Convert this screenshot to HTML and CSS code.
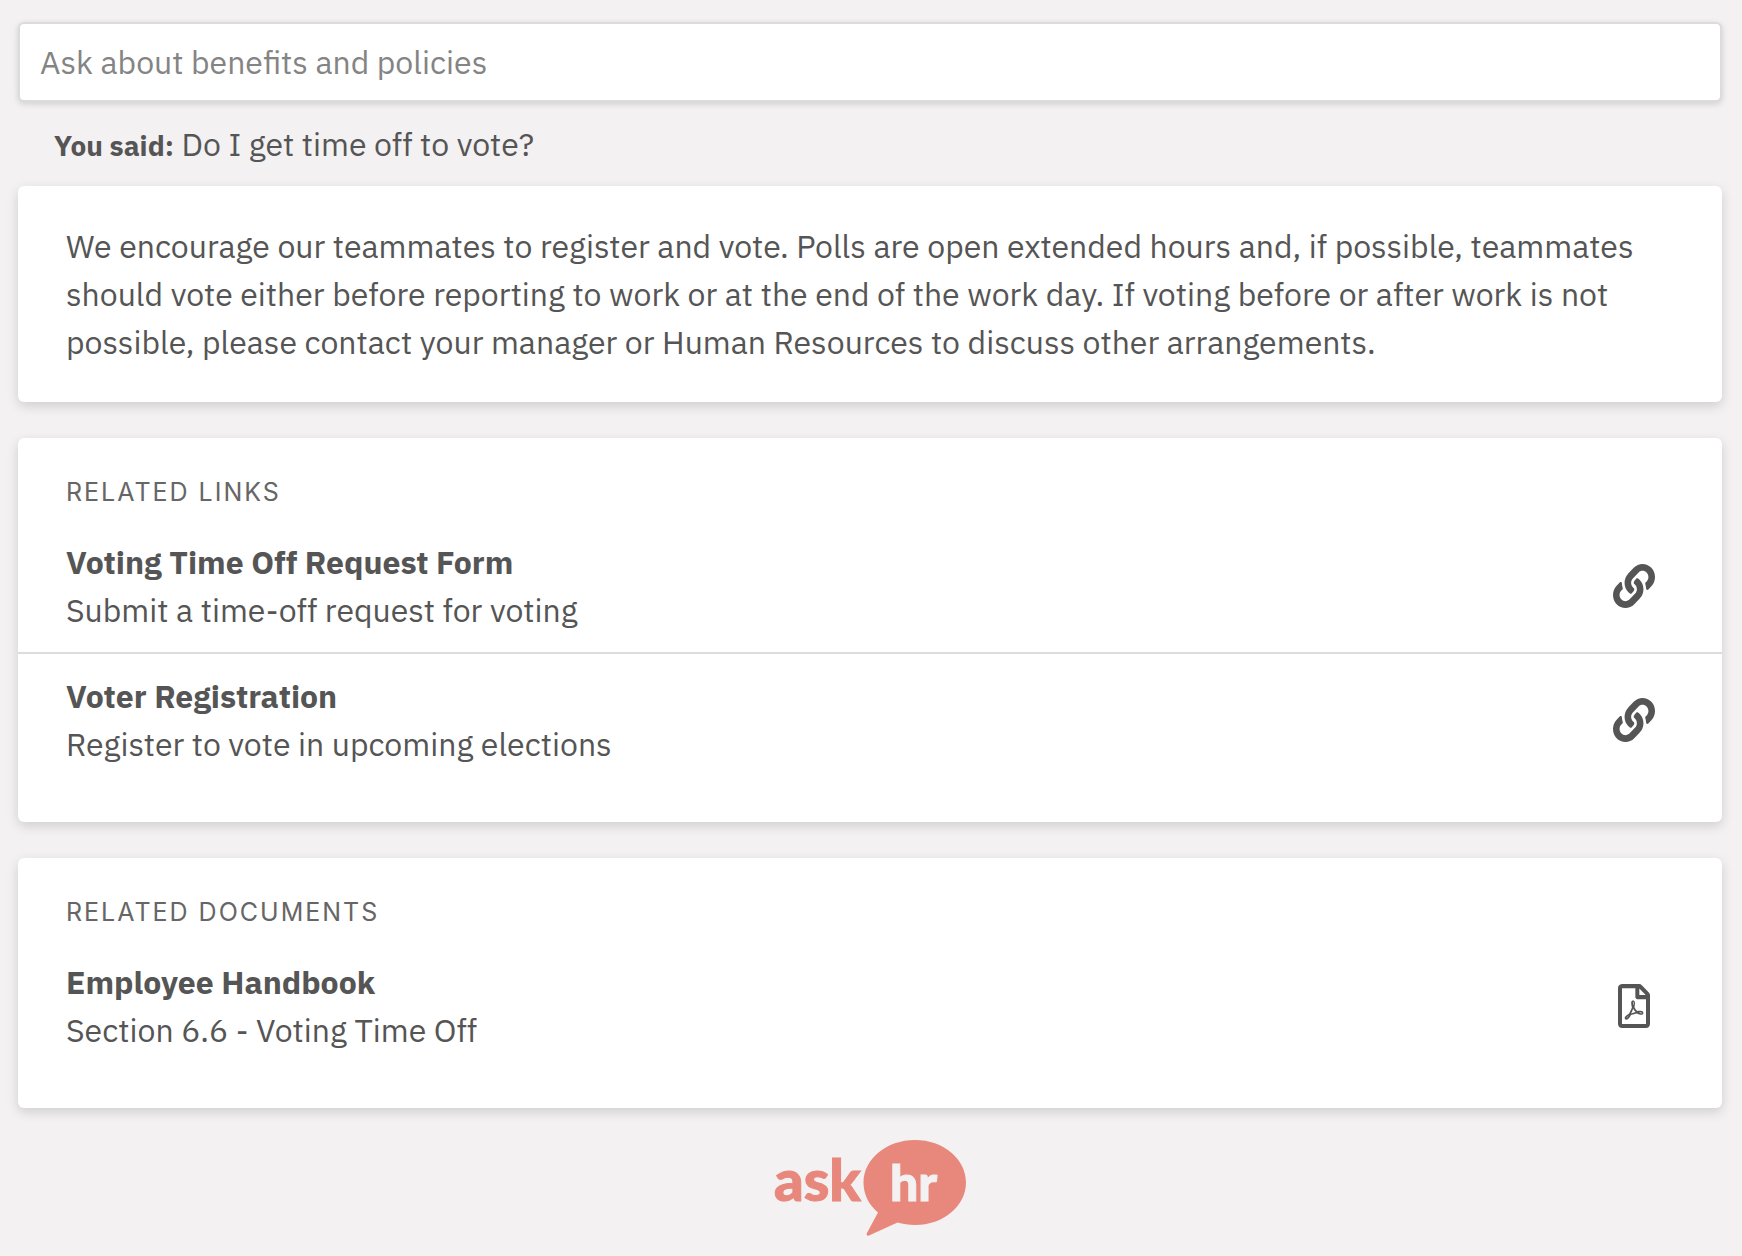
FILE: index.html
```html
<!DOCTYPE html>
<html lang="en">
<head>
    <meta charset="UTF-8">
    <meta name="viewport" content="width=device-width, initial-scale=1.0">
    <title>Ask HR</title>
    <link rel="stylesheet" href="styles.css">
</head>
<body>
    <!-- shared icon shapes -->
    <svg class="sprite" aria-hidden="true">
        <symbol id="icon-link" viewBox="0 0 512 512" preserveAspectRatio="none">
            <path d="M326.612 185.391c59.747 59.809 58.927 155.698.36 214.59-.11.12-.24.25-.36.37l-67.2 67.2c-59.27 59.27-155.699 59.262-214.96 0-59.27-59.26-59.27-155.7 0-214.96l37.106-37.106c9.84-9.84 26.786-3.3 27.294 10.606.648 17.722 3.826 35.527 9.69 52.721 1.986 5.822.567 12.262-3.783 16.612l-13.087 13.087c-28.026 28.026-28.905 73.66-1.155 101.96 28.024 28.579 74.086 28.749 102.325.51l67.2-67.19c28.191-28.191 28.073-73.757 0-101.83-3.701-3.694-7.429-6.564-10.341-8.569a16.037 16.037 0 0 1-6.947-12.606c-.396-10.567 3.348-21.456 11.698-29.806l21.054-21.055c5.521-5.521 14.182-6.199 20.584-1.731a152.482 152.482 0 0 1 20.522 17.197zM467.547 44.449c-59.261-59.262-155.69-59.27-214.96 0l-67.2 67.2c-.12.12-.25.25-.36.37-58.566 58.892-59.387 154.781.36 214.59a152.454 152.454 0 0 0 20.521 17.196c6.402 4.468 15.064 3.789 20.584-1.731l21.054-21.055c8.35-8.35 12.094-19.239 11.698-29.806a16.037 16.037 0 0 0-6.947-12.606c-2.912-2.005-6.64-4.875-10.341-8.569-28.073-28.073-28.191-73.639 0-101.83l67.2-67.19c28.239-28.239 74.3-28.069 102.325.51 27.75 28.3 26.872 73.934-1.155 101.96l-13.087 13.087c-4.35 4.35-5.769 10.79-3.783 16.612 5.864 17.194 9.042 34.999 9.69 52.721.509 13.906 17.454 20.446 27.294 10.606l37.106-37.106c59.271-59.259 59.271-155.699.001-214.959z"/>
        </symbol>
        <symbol id="icon-pdf" viewBox="0 0 384 512" preserveAspectRatio="none">
            <path d="M369.9 97.9L286 14C277 5 264.8-.1 252.1-.1H48C21.5 0 0 21.5 0 48v416c0 26.5 21.5 48 48 48h288c26.5 0 48-21.5 48-48V131.9c0-12.7-5.1-25-14.1-34zM332.1 128H256V51.9l76.1 76.1zM48 464V48h160v104c0 13.3 10.7 24 24 24h104v288H48zm250.2-143.7c-12.2-12-47-8.7-64.4-6.5-17.2-10.5-28.7-25-36.8-46.3 3.9-16.1 10.1-40.6 5.4-56-4.2-26.2-37.8-23.6-42.6-5.9-4.4 16.1-.4 38.5 7 67.1-10 23.9-24.9 56-35.4 74.4-20 10.3-47 26.2-51 46.2-3.3 15.8 26 55.2 76.1-31.2 22.4-7.4 46.8-16.5 68.4-20.1 18.9 10.2 41 17 55.8 17 25.5 0 28-28.2 17.5-38.7zm-198.1 77.8c5.1-13.7 24.5-29.5 30.4-35-19 30.3-30.4 35.7-30.4 35zm81.6-190.6c7.4 0 6.7 32.1 1.8 40.8-4.4-13.9-4.3-40.8-1.8-40.8zm-24.4 136.6c9.7-16.9 18-37 24.7-54.7 8.3 15.1 18.9 27.2 30.1 35.5-20.8 4.3-38.9 13.1-54.8 19.2zm131.6-5s-5 6-37.3-7.8c35.1-2.6 40.9 5.4 37.3 7.8z"/>
        </symbol>
    </svg>

    <main class="page">
        <form class="search">
            <input type="text" class="search-input" placeholder="Ask about benefits and policies" aria-label="Ask about benefits and policies">
        </form>
        <p class="said"><strong>You said:</strong> Do I get time off to vote?</p>

        <section class="card">
            <p class="answer">We encourage our teammates to register and vote. Polls are open extended hours and, if possible, teammates should vote either before reporting to work or at the end of the work day. If voting before or after work is not possible, please contact your manager or Human Resources to discuss other arrangements.</p>
        </section>

        <section class="card">
            <h2 class="card-title">Related Links</h2>
            <ul class="list">
                <li>
                    <a class="item" href="#">
                        <span class="item-text"><strong>Voting Time Off Request Form</strong><span>Submit a time-off request for voting</span></span>
                        <span class="item-icon"><svg class="icon-link"><use href="#icon-link"/></svg></span>
                    </a>
                </li>
                <li>
                    <a class="item" href="#">
                        <span class="item-text"><strong>Voter Registration</strong><span>Register to vote in upcoming elections</span></span>
                        <span class="item-icon"><svg class="icon-link"><use href="#icon-link"/></svg></span>
                    </a>
                </li>
            </ul>
        </section>

        <section class="card">
            <h2 class="card-title">Related Documents</h2>
            <ul class="list">
                <li>
                    <a class="item" href="#">
                        <span class="item-text"><strong>Employee Handbook</strong><span>Section 6.6 - Voting Time Off</span></span>
                        <span class="item-icon"><svg class="icon-pdf"><use href="#icon-pdf"/></svg></span>
                    </a>
                </li>
            </ul>
        </section>
    </main>

    <footer class="footer">
        <svg class="logo" viewBox="0 0 192 96" role="img" aria-label="ask hr">
            <path class="logo-bubble" d="M141 0c28.400 0 51 19 51 42.500S169.400 85 141 85c-6.200 0-12-.9-17.500-2.500L95 95.500c-1.500.6-3-.7-2.200-2.200L104 72.500C95 65 89.500 54.500 89.500 42.500 89.500 19 112.600 0 141 0z"/>
            <text class="logo-ask" x="0" y="61">ask</text>
            <text class="logo-hr" x="116" y="61">hr</text>
        </svg>
    </footer>
</body>
</html>
```
FILE: styles.css
```css
*{
    margin: 0;
    padding: 0;
    box-sizing: border-box;
}
body{
    background-color: #f3f1f2;
    color: #555;
    font-family: "IBM Plex Sans", Roboto, sans-serif;
    font-size: 32px;
    line-height: 48px;
}
.sprite{
    display: none;
}
.page{
    padding: 22px 20px 0 18px;
}
.search-input{
    display: block;
    width: 100%;
    height: 80px;
    padding: 0 20px;
    border: 2px solid #dcdcdc;
    border-radius: 6px;
    background-color: #fff;
    box-shadow: 0 2px 6px rgba(0,0,0,.15);
    color: #555;
    font: inherit;
}
.search-input::placeholder{
    color: #848484;
    opacity: 1;
}
.said{
    padding: 18px 36px;
}
.said strong{
    font-size: 28px;
    line-height: 28px;
}
.card{
    padding: 36px 0;
    margin-bottom: 36px;
    border-radius: 6px;
    background-color: #fff;
    box-shadow: 0 4px 12px rgba(0,0,0,.15);
}
.answer{
    padding: 0 48px;
}
.card-title{
    padding: 0 48px 10px;
    color: #666;
    font-family: Inter, sans-serif;
    font-size: 25px;
    font-weight: 400;
    line-height: 36px;
    letter-spacing: 2px;
    text-transform: uppercase;
}
.list{
    list-style: none;
}
.list li + li{
    border-top: 2px solid #dcdcdc;
}
.item{
    display: flex;
    align-items: center;
    justify-content: space-between;
    padding: 18px 48px;
    color: inherit;
    text-decoration: none;
}
.item-text{
    display: flex;
    flex-direction: column;
}
.item-icon{
    display: flex;
    justify-content: center;
    width: 80px;
}
.item-icon svg{
    fill: #555;
}
.icon-link{
    width: 42px;
    height: 44px;
}
.icon-pdf{
    width: 32px;
    height: 44px;
}
.footer{
    display: flex;
    justify-content: center;
    padding: 0 20px 16px 18px;
}
.logo{
    width: 192px;
    height: 96px;
    margin-top: -4px;
}
.logo-bubble,
.logo-ask{
    fill: #e8877c;
}
.logo text{
    font-family: Lato, sans-serif;
    font-weight: 900;
    stroke-width: 1px;
}
.logo-ask{
    font-size: 58px;
    stroke: #e8877c;
}
.logo-hr{
    font-size: 50px;
    fill: #f3f1f2;
    stroke: #f3f1f2;
}
```
